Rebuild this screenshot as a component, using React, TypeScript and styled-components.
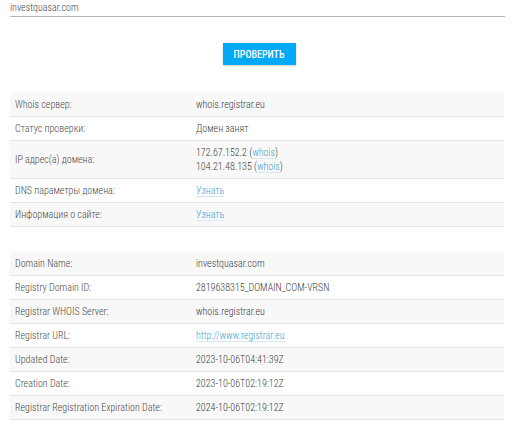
import React from "react";
import styled, { createGlobalStyle } from "styled-components";

const Global = createGlobalStyle`
  html, body { margin: 0; padding: 0; background: #fff; }
  body { font-family: "Roboto Condensed", "Liberation Sans Narrow", "Arial Narrow", Roboto, sans-serif; color: #555; }
`;

const Page = styled.div`
  padding: 0 7px 0 10px;
`;

const InputLine = styled.div`
  height: 16px;
  border-bottom: 1px solid #b5b5b5;
  font-size: 10px;
  font-weight: 300;
  line-height: 16px;
  color: #444;
`;

const ButtonRow = styled.div`
  display: flex;
  justify-content: center;
  padding: 26px 0 28px 3px;
`;

const Button = styled.button`
  width: 73px;
  height: 22px;
  border: none;
  background: #03a9f4;
  color: #fff;
  font-family: inherit;
  font-size: 10px;
  font-weight: 500;
  box-shadow: 0 1px 2px rgba(0, 0, 0, 0.2);
  padding: 0;
`;

const Table = styled.div<{ $gap?: number }>`
  width: 494px;
  margin-top: ${(p) => p.$gap ?? 0}px;
  display: flex;
  flex-direction: column;
`;

const Row = styled.div<{ $h?: number }>`
  display: grid;
  grid-template-columns: 181px 1fr;
  align-items: center;
  min-height: ${(p) => p.$h ?? 23}px;
  border-bottom: 1px solid #e4e4e4;
  font-size: 10px;
  font-weight: 300;
  line-height: 14px;
  &:nth-child(odd) { background: #f8f8f8; }
`;

const Label = styled.div`
  padding-left: 5px;
  color: #4a4a4a;
`;

const Value = styled.div`
  padding-left: 5px;
  color: #3a3a3a;
`;

const Link = styled.a`
  color: #3a9fd0;
  text-decoration: none;
  border-bottom: 1px solid #d6e9f3;
`;

const infoRows: [string, React.ReactNode, number?][] = [
  ["Whois сервер:", "whois.registrar.eu"],
  ["Статус проверки:", "Домен занят"],
  [
    "IP адрес(а) домена:",
    <>
      172.67.152.2 (<Link>whois</Link>)
      <br />
      104.21.48.135 (<Link>whois</Link>)
    </>,
    37,
  ],
  ["DNS параметры домена:", <Link>Узнать</Link>],
  ["Информация о сайте:", <Link>Узнать</Link>],
];

const whoisRows: [string, React.ReactNode][] = [
  ["Domain Name:", "investquasar.com"],
  ["Registry Domain ID:", "2819638315_DOMAIN_COM-VRSN"],
  ["Registrar WHOIS Server:", "whois.registrar.eu"],
  ["Registrar URL:", <Link>http://www.registrar.eu</Link>],
  ["Updated Date:", "2023-10-06T04:41:39Z"],
  ["Creation Date:", "2023-10-06T02:19:12Z"],
  ["Registrar Registration Expiration Date:", "2024-10-06T02:19:12Z"],
];

export default function App() {
  return (
    <>
      <Global />
      <Page>
        <InputLine>investquasar.com</InputLine>
        <ButtonRow>
          <Button>ПРОВЕРИТЬ</Button>
        </ButtonRow>
        <Table>
          {infoRows.map(([l, v, h], i) => (
            <Row key={i} $h={h}>
              <Label>{l}</Label>
              <Value>{v}</Value>
            </Row>
          ))}
        </Table>
        <Table $gap={25}>
          {whoisRows.map(([l, v], i) => (
            <Row key={i}>
              <Label>{l}</Label>
              <Value>{v}</Value>
            </Row>
          ))}
        </Table>
      </Page>
    </>
  );
}
